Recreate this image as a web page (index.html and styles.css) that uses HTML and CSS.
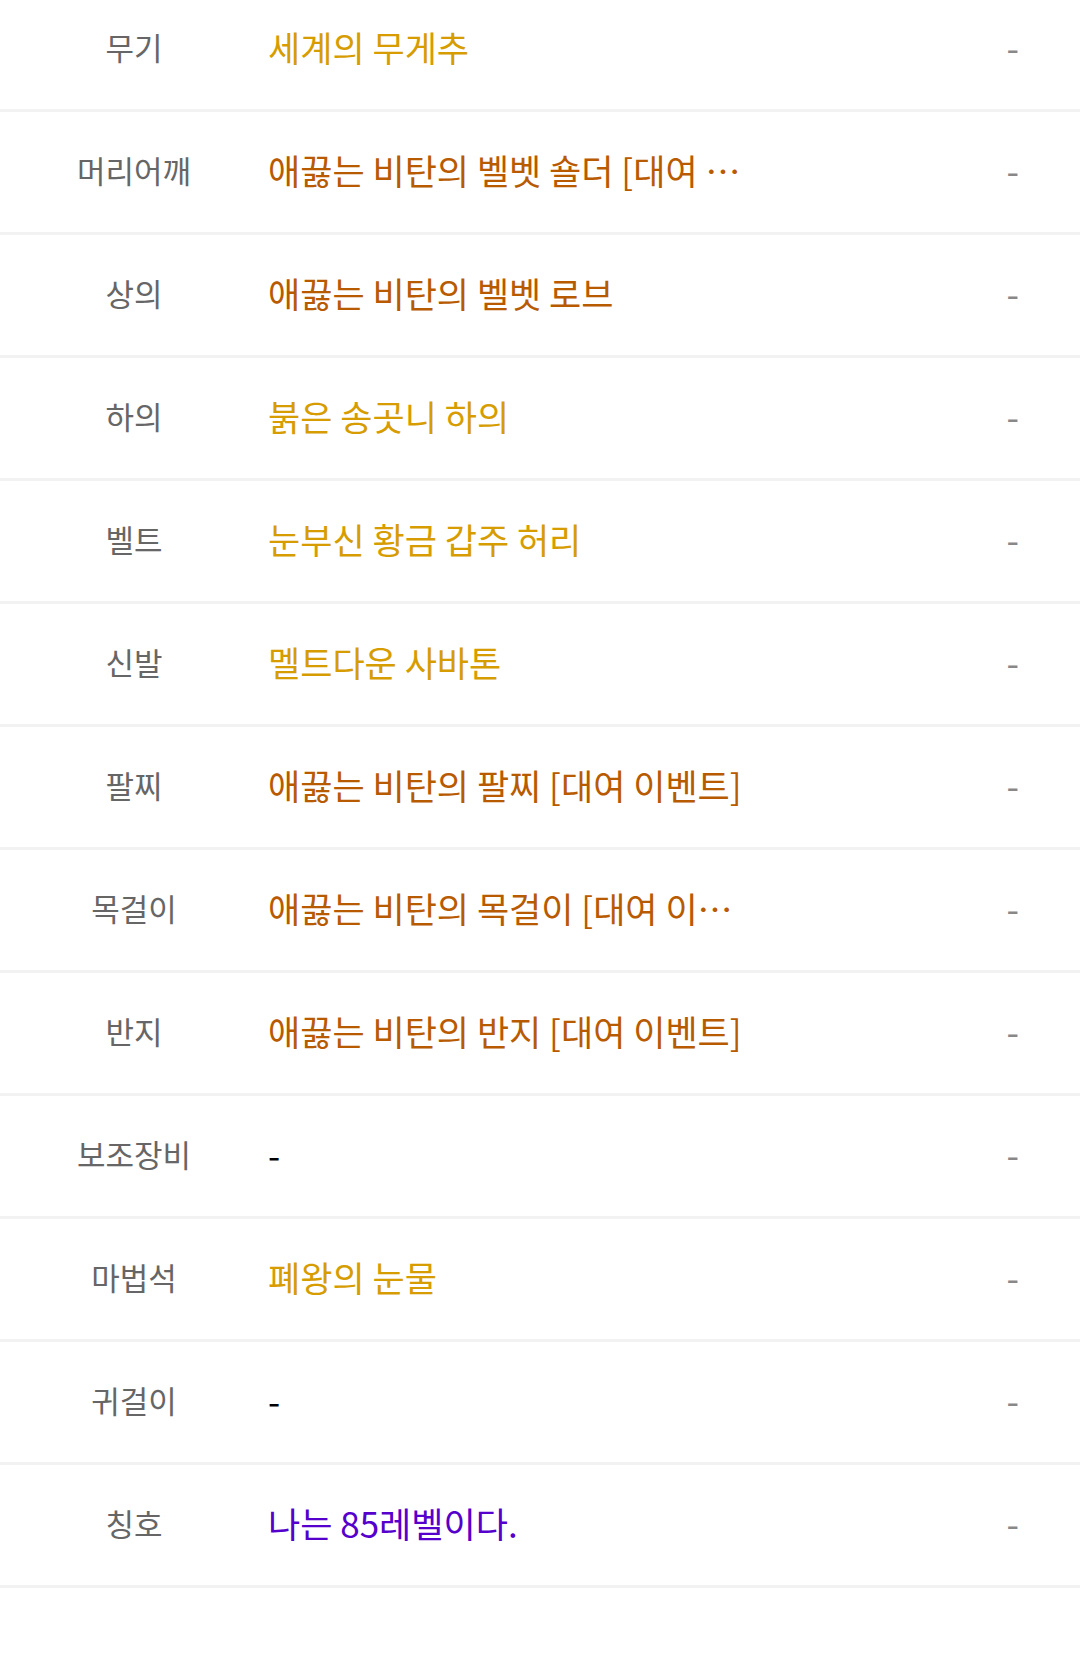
FILE: index.html
```html
<!doctype html>
<html>

	<head>
		<title>장착 장비</title>
		<meta charset="utf-8" />
		<link rel="stylesheet" href="styles.css">
	</head>

	<body>

		<ul class="equip">
			<li><span class="slot">무기</span><span class="name unique">세계의 무게추</span><span class="opt">-</span></li>
			<li><span class="slot">머리어깨</span><span class="name epic">애끓는 비탄의 벨벳 숄더 [대여 이벤트]</span><span class="opt">-</span></li>
			<li><span class="slot">상의</span><span class="name epic">애끓는 비탄의 벨벳 로브</span><span class="opt">-</span></li>
			<li><span class="slot">하의</span><span class="name unique">붉은 송곳니 하의</span><span class="opt">-</span></li>
			<li><span class="slot">벨트</span><span class="name unique">눈부신 황금 갑주 허리</span><span class="opt">-</span></li>
			<li><span class="slot">신발</span><span class="name unique">멜트다운 사바톤</span><span class="opt">-</span></li>
			<li><span class="slot">팔찌</span><span class="name epic">애끓는 비탄의 팔찌 [대여 이벤트]</span><span class="opt">-</span></li>
			<li><span class="slot">목걸이</span><span class="name epic">애끓는 비탄의 목걸이 [대여 이벤트]</span><span class="opt">-</span></li>
			<li><span class="slot">반지</span><span class="name epic">애끓는 비탄의 반지 [대여 이벤트]</span><span class="opt">-</span></li>
			<li><span class="slot">보조장비</span><span class="name">-</span><span class="opt">-</span></li>
			<li><span class="slot">마법석</span><span class="name unique">폐왕의 눈물</span><span class="opt">-</span></li>
			<li><span class="slot">귀걸이</span><span class="name">-</span><span class="opt">-</span></li>
			<li><span class="slot">칭호</span><span class="name rare">나는 85레벨이다.</span><span class="opt">-</span></li>
		</ul>

	</body>

</html>
```

FILE: styles.css
```css
body {
	margin: 0;
	background: #fff;
	font-family: "Noto Sans CJK KR", "Noto Sans", sans-serif;
}

.equip {
	list-style: none;
	padding: 0;
	margin: -11px 0 0;
}

.equip li {
	display: flex;
	align-items: center;
	height: 123px;
	padding-bottom: 6px;
	box-sizing: border-box;
	border-bottom: 3px solid #f2f2f2;
}

.equip .slot {
	width: 268px;
	flex: none;
	text-align: center;
	font-size: 31px;
	color: #666;
}

.equip .name {
	flex: 1;
	max-width: 480px;
	white-space: nowrap;
	overflow: hidden;
	text-overflow: ellipsis;
	font-size: 35px;
	color: #000;
}

.equip .unique {
	color: #d69c00;
}

.equip .epic {
	color: #b85a00;
}

.equip .rare {
	color: #5500cc;
}

.equip .opt {
	margin-left: auto;
	padding-right: 61px;
	font-size: 36px;
	color: #888;
}
```
